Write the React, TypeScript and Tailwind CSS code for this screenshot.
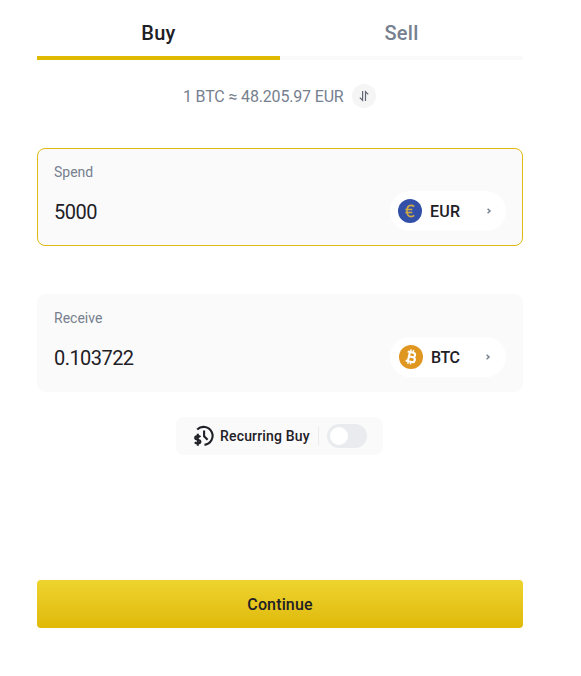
import React, { useState } from "react";

interface AmountFieldProps {
  label: string;
  value: string;
  onChange: (value: string) => void;
  active?: boolean;
  valueClassName: string;
  children: React.ReactNode;
}

const ChevronIcon = () => (
  <svg className="h-2 w-2 text-[#76808f]" viewBox="0 0 8 8" fill="none" stroke="currentColor" strokeWidth={1.5}>
    <path d="M2.6 1.8L5 4L2.6 6.2" />
  </svg>
);

const SwapIcon = () => (
  <svg className="h-3 w-3" viewBox="0 0 12 12" fill="none" stroke="#5f6673" strokeWidth={1.2}>
    <path d="M4.6 1v9.3L1.8 7.6" />
    <path d="M7.5 11V1.7l2.7 2.7" />
  </svg>
);

const EuroIcon = () => (
  <svg className="h-6 w-6" viewBox="0 0 24 24" fill="none">
    <circle cx="12" cy="12" r="12" fill="#3350a8" />
    <path
      d="M16.2 7.6C15.3 6.8 14.2 6.4 13.1 6.4c-2.6 0-4.1 2.2-4.1 5.6s1.5 5.6 4.1 5.6c1.2 0 2.3-.4 3.1-1.2M7.3 10.5h7M7.3 13.5h7"
      stroke="#d0ab45"
      strokeWidth={1.6}
    />
  </svg>
);

const BitcoinIcon = () => (
  <svg className="h-6 w-6" viewBox="0 0 24 24" fill="none">
    <circle cx="12" cy="12" r="12" fill="#df9720" />
    <g transform="rotate(13 12 12)" stroke="#fff">
      <path
        d="M7.6 7.4h5.6c3.1 0 3.1 4.4 0 4.4h-3h3.6c3.5 0 3.5 4.9 0 4.9H7.6M9.9 7.4v9.3"
        strokeWidth={2.1}
      />
      <path d="M10.4 4.6v2.8M13 4.6v2.8M10.4 16.5v2.9M13 16.5v2.9" strokeWidth={1.5} />
    </g>
  </svg>
);

const RecurringIcon = () => (
  <svg className="h-[22px] w-[22px]" viewBox="0 0 22 22" fill="none" stroke="#1e2026">
    <path d="M4.2 4.6A9 9 0 1 1 11.5 19.9" strokeWidth={2.1} />
    <path d="M11.1 5.4v5.8l3.5 3.5" strokeWidth={2.1} />
    <path
      d="M7.4 12C6.8 11.4 6 11.1 4.9 11.1c-1.5 0-2.7.6-2.7 1.8 0 2.5 5.2 1.1 5.2 3.7 0 1.1-1 1.8-2.6 1.8-1.2 0-2.2-.4-3-1.2M4.8 8.8v12"
      strokeWidth={2.1}
    />
  </svg>
);

const AmountField: React.FC<AmountFieldProps> = ({
  label,
  value,
  onChange,
  active = false,
  valueClassName,
  children,
}) => (
  <div
    className={`flex h-[98px] justify-between rounded-lg border bg-[#fafafa] px-4 ${
      active ? "border-[#e0ba12]" : "border-[#fafafa]"
    }`}
  >
    <label className="flex flex-col pt-[13px]">
      <span className="text-[14px] leading-5 text-[#76808f]">{label}</span>
      <input
        type="text"
        value={value}
        onChange={(e) => onChange(e.target.value)}
        className={`mt-4 w-40 bg-transparent text-[20px] leading-7 text-[#1e2026] outline-none ${valueClassName}`}
      />
    </label>
    {children}
  </div>
);

export default function App() {
  const [tab, setTab] = useState("Buy");
  const [spend, setSpend] = useState("5000");
  const [receive, setReceive] = useState("0.103722");
  const [recurring, setRecurring] = useState(false);

  return (
    <div className="min-h-screen bg-white pl-[37px] pr-[58px] font-['Roboto',sans-serif]">
      {/* Tabs */}
      <div className="flex h-[60px]">
        {["Buy", "Sell"].map((name) => (
          <button
            key={name}
            type="button"
            onClick={() => setTab(name)}
            className={`flex-1 border-b-4 pt-2.5 text-[20px] font-medium tracking-[0.3px] ${
              tab === name ? "border-[#e0ba00] text-[#1e2026]" : "border-[#fafafa] text-[#76808f]"
            }`}
          >
            {name}
          </button>
        ))}
      </div>

      {/* Rate */}
      <div className="mt-6 flex h-6 items-center justify-center gap-2 pr-px text-[#76808f]">
        <span className="w-[161px] whitespace-nowrap pt-0.5 text-[16px] tracking-[-0.17px]">
          1 BTC ≈ 48.205.97 EUR
        </span>
        <button type="button" className="flex h-6 w-6 items-center justify-center rounded-full bg-[#f5f5f5]">
          <SwapIcon />
        </button>
      </div>

      <div className="mt-10 flex flex-col gap-12">
        <AmountField label="Spend" value={spend} onChange={setSpend} active valueClassName="tracking-[-0.5px]">
          <button type="button" className="mt-[42px] flex h-10 w-[116px] items-center rounded-full bg-white pl-2 pr-[13px]">
            <EuroIcon />
            <span className="ml-2 flex-1 pt-0.5 text-left text-[16px] font-medium tracking-[0.3px] text-[#1e2026]">
              EUR
            </span>
            <ChevronIcon />
          </button>
        </AmountField>

        <AmountField label="Receive" value={receive} onChange={setReceive} valueClassName="tracking-[-0.55px]">
          <button type="button" className="mt-[42px] flex h-10 w-[116px] items-center rounded-full bg-white pl-[9px] pr-3.5">
            <BitcoinIcon />
            <span className="ml-2 flex-1 pt-0.5 text-left text-[16px] font-medium tracking-[-0.4px] text-[#1e2026]">
              BTC
            </span>
            <ChevronIcon />
          </button>
        </AmountField>
      </div>

      {/* Recurring buy */}
      <div className="mt-[25px] flex justify-center pr-px">
        <div className="flex h-[38px] w-[207px] items-center rounded-lg bg-[#fafafa] pl-[17px] pr-4">
          <RecurringIcon />
          <span className="ml-[5px] w-[98px] whitespace-nowrap text-[14px] font-medium tracking-[0.17px] text-[#1e2026]">
            Recurring Buy
          </span>
          <span className="h-[18px] w-px bg-[#eaecef]" />
          <button
            type="button"
            role="switch"
            aria-checked={recurring}
            onClick={() => setRecurring(!recurring)}
            className={`ml-2 flex h-6 w-10 items-center rounded-full px-[3px] ${
              recurring ? "justify-end bg-[#e0ba00]" : "justify-start bg-[#eaebee]"
            }`}
          >
            <span className="h-[18px] w-[18px] rounded-full bg-white" />
          </button>
        </div>
      </div>

      <button
        type="button"
        className="mt-[125px] h-12 w-full rounded bg-linear-to-b from-[#edd42d] to-[#e0b905] pt-0.5 text-[16px] font-medium tracking-[0.15px] text-[#1e2026]"
      >
        Continue
      </button>
    </div>
  );
}
